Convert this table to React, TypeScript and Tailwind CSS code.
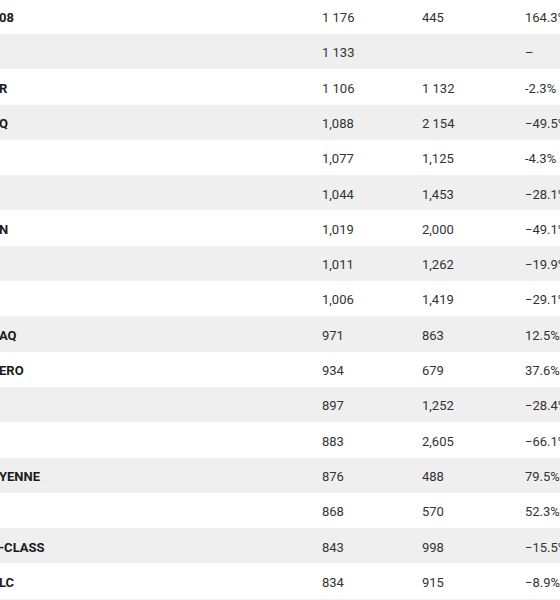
import React from 'react'

interface Row {
  model: string
  current: string
  previous: string
  change: string
}

// table is scrolled sideways, so only the tail of the model names is in view
const rows: Row[] = [
  { model: '08', current: '1 176', previous: '445', change: '164.3%' },
  { model: '', current: '1 133', previous: '', change: '–' },
  { model: 'R', current: '1 106', previous: '1 132', change: '-2.3%' },
  { model: 'Q', current: '1,088', previous: '2 154', change: '−49.5%' },
  { model: '', current: '1,077', previous: '1,125', change: '-4.3%' },
  { model: '', current: '1,044', previous: '1,453', change: '−28.1%' },
  { model: 'N', current: '1,019', previous: '2,000', change: '−49.1%' },
  { model: '', current: '1,011', previous: '1,262', change: '−19.9%' },
  { model: '', current: '1,006', previous: '1,419', change: '−29.1%' },
  { model: 'AQ', current: '971', previous: '863', change: '12.5%' },
  { model: 'ERO', current: '934', previous: '679', change: '37.6%' },
  { model: '', current: '897', previous: '1,252', change: '−28.4%' },
  { model: '', current: '883', previous: '2,605', change: '−66.1%' },
  { model: 'YENNE', current: '876', previous: '488', change: '79.5%' },
  { model: '', current: '868', previous: '570', change: '52.3%' },
  { model: '-CLASS', current: '843', previous: '998', change: '−15.5%' },
  { model: 'LC', current: '834', previous: '915', change: '−8.9%' },
  { model: '', current: '821', previous: '1,034', change: '−20.6%' },
]

const App: React.FC = () => {
  return (
    <div className="w-[560px] h-[600px] overflow-hidden bg-white font-['Roboto',sans-serif] text-[13px]">
      <div className="-mt-[1.3px]">
        {rows.map((row, i) => (
          <div
            key={i}
            className={`grid grid-cols-[323px_100px_103px_1fr] items-center h-[35.3px] pt-[3px] -ml-px whitespace-nowrap ${
              i % 2 === 1 ? 'bg-[#efefef]' : 'bg-white'
            }`}
          >
            <div className="font-bold text-[#1a1a1a]">{row.model}</div>
            <div className="text-[#333333]">{row.current}</div>
            <div className="text-[#333333]">{row.previous}</div>
            <div className="text-[#333333]">{row.change}</div>
          </div>
        ))}
      </div>
    </div>
  )
}

export default App
